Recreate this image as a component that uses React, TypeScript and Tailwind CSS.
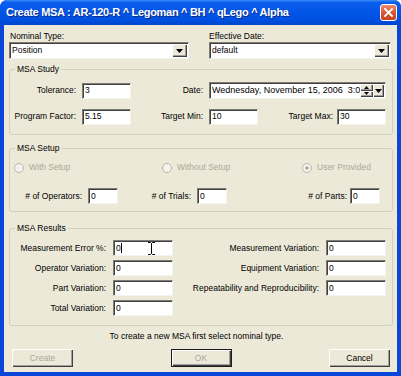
import React from "react";

const sunken =
  "bg-white border border-t-[#7f7d73] border-l-[#7f7d73] border-r-[#f4f3ee] border-b-[#f4f3ee] shadow-[inset_1px_1px_0_#404040]";

const raised =
  "bg-[#ece9d8] shadow-[inset_1px_1px_0_#ffffff,inset_-1px_-1px_0_#404040,inset_-2px_-2px_0_#a0a0a0]";

function Input({ w, v, children }: { w: string; v?: string; children?: React.ReactNode }) {
  return (
    <div className={`relative ${w} h-[16px] ${sunken} flex items-center pl-[2px] overflow-hidden whitespace-nowrap`}>
      {v}
      {children}
    </div>
  );
}

function Arrow({ up = false }: { up?: boolean }) {
  return (
    <svg width="7" height="4" viewBox="0 0 7 4">
      <path d={up ? "M0 4h7L3.5 0z" : "M0 0h7L3.5 4z"} fill="#000" />
    </svg>
  );
}

function Combo({ w, v }: { w: string; v: string }) {
  return (
    <div className={`${w} h-[17px] ${sunken} flex items-stretch p-[1px] pl-[2px]`}>
      <div className="flex-1 flex items-center">{v}</div>
      <div className={`w-[15px] ${raised} flex items-center justify-center`}>
        <Arrow />
      </div>
    </div>
  );
}

function DatePicker() {
  return (
    <div className={`w-[177px] h-[17px] ${sunken} flex items-stretch p-[1px] pl-[2px]`}>
      <div className="flex-1 flex items-center whitespace-pre text-[9px]">
        Wednesday, November 15, 2006  3:0
      </div>
      <div className="w-[13px] flex flex-col">
        <div className={`flex-1 ${raised} flex items-center justify-center`}>
          <svg width="5" height="3" viewBox="0 0 5 3">
            <path d="M0 3h5L2.5 0z" fill="#000" />
          </svg>
        </div>
        <div className={`flex-1 ${raised} flex items-center justify-center`}>
          <svg width="5" height="3" viewBox="0 0 5 3">
            <path d="M0 0h5L2.5 3z" fill="#000" />
          </svg>
        </div>
      </div>
      <div className={`w-[12px] ${raised} flex items-center justify-center`}>
        <Arrow />
      </div>
    </div>
  );
}

function Radio({ label, checked = false, w }: { label: string; checked?: boolean; w: string }) {
  return (
    <div className={`${w} flex items-center gap-[5px] text-[#aca899]`}>
      <svg width="10" height="10" viewBox="0 0 10 10">
        <circle cx="5" cy="5" r="4.5" fill="#f4f3ee" stroke="#b8b5a6" />
        {checked && <circle cx="5" cy="5" r="1.8" fill="#aca899" />}
      </svg>
      {label}
    </div>
  );
}

function Group({ title, className, children }: { title: string; className: string; children: React.ReactNode }) {
  return (
    <fieldset className={`ml-[5px] mr-[4px] border border-[#d0d0bf] rounded-[3px] ${className}`}>
      <legend className="ml-[5px] px-[2px] leading-[11px]">{title}</legend>
      {children}
    </fieldset>
  );
}

function Btn({ label, disabled = false, def = false }: { label: string; disabled?: boolean; def?: boolean }) {
  return (
    <div
      className={`w-[61px] h-[18px] flex items-center justify-center ${raised} ${
        def ? "border border-[#1c1c1c]" : ""
      } ${disabled ? "text-[#aca899]" : "text-black"}`}
    >
      {label}
    </div>
  );
}

export default function App() {
  return (
    <div className="w-[401px] h-[376px] flex flex-col bg-[#0a46da] rounded-t-[7px] overflow-hidden font-['Liberation_Sans',Arial,sans-serif] text-[8.5px] leading-[11px] text-black">
      {/* title bar */}
      <div className="h-[25px] flex items-center bg-[linear-gradient(to_bottom,#3b8cf7_0%,#0b5ded_10%,#0256e8_45%,#0050e0_80%,#0044cc_100%)]">
        <div className="flex-1 pl-[6px] text-white font-bold text-[11px] tracking-[-0.3px] [text-shadow:1px_1px_0_#0a2a8a]">
          Create MSA : AR-120-R ^ Legoman ^ BH ^ qLego ^ Alpha
        </div>
        <div className="mr-[4px] w-[17px] h-[17px] rounded-[3px] border border-white bg-[linear-gradient(to_bottom,#ee8a6b,#d8552f_55%,#c8441e)] flex items-center justify-center">
          <svg width="9" height="9" viewBox="0 0 9 9">
            <path d="M1 1l7 7M8 1L1 8" stroke="#fff" strokeWidth="1.8" strokeLinecap="square" />
          </svg>
        </div>
      </div>

      {/* client */}
      <div className="mx-[4px] h-[347px] bg-[#ece9d8] flex flex-col">
        <div className="mt-[6px] flex">
          <div className="w-[200px] pl-[6px]">Nominal Type:</div>
          <div className="pl-[5px]">Effective Date:</div>
        </div>
        <div className="flex ml-[5px]">
          <Combo w="w-[180px]" v="Position" />
          <div className="ml-[20px]">
            <Combo w="w-[182px]" v="default" />
          </div>
        </div>

        <Group title="MSA Study" className="mt-[5px] pt-[7px] pb-[9px]">
          <div className="flex items-center h-[17px]">
            <span className="w-[66px] text-right">Tolerance:</span>
            <span className="ml-[6px]"><Input w="w-[49px]" v="3" /></span>
            <span className="w-[72px] text-right">Date:</span>
            <span className="ml-[6px]"><DatePicker /></span>
          </div>
          <div className="flex items-center h-[17px] mt-[9px]">
            <span className="w-[66px] text-right">Program Factor:</span>
            <span className="ml-[6px]"><Input w="w-[49px]" v="5.15" /></span>
            <span className="w-[72px] text-right">Target Min:</span>
            <span className="ml-[6px]"><Input w="w-[49px]" v="10" /></span>
            <span className="w-[75px] text-right">Target Max:</span>
            <span className="ml-[4px]"><Input w="w-[49px]" v="30" /></span>
          </div>
        </Group>

        <Group title="MSA Setup" className="mt-[8px] pt-[8px] pb-[7px]">
          <div className="flex items-center h-[11px] pl-[4px]">
            <Radio w="w-[148px]" label="With Setup" />
            <Radio w="w-[140px]" label="Without Setup" />
            <Radio w="w-[80px]" label="User Provided" checked />
          </div>
          <div className="flex items-center mt-[15px]">
            <span className="w-[72px] text-right"># of Operators:</span>
            <span className="ml-[6px]"><Input w="w-[30px]" v="0" /></span>
            <span className="w-[73px] text-right"># of Trials:</span>
            <span className="ml-[6px]"><Input w="w-[30px]" v="0" /></span>
            <span className="w-[120px] text-right"># of Parts:</span>
            <span className="ml-[3px]"><Input w="w-[30px]" v="0" /></span>
          </div>
        </Group>

        <Group title="MSA Results" className="mt-[11px] pt-[6px] pb-[9px]">
          <div className="grid grid-cols-[96px_60px_139px_60px] gap-x-[7px] gap-y-[4px] items-center">
            <span className="text-right">Measurement Error %:</span>
            <Input w="w-[60px]" v="0">
              <span className="w-[1px] h-[10px] bg-black" />
              <svg className="absolute left-[34px] top-[1px]" width="7" height="13" viewBox="0 0 7 13">
                <path d="M0 0.5h2.5l1 1 1-1H7M3.5 1.5v10M0 12.5h2.5l1-1 1 1H7" stroke="#000" fill="none" strokeWidth="1" />
              </svg>
            </Input>
            <span className="text-right">Measurement Variation:</span>
            <Input w="w-[60px]" v="0" />

            <span className="text-right">Operator Variation:</span>
            <Input w="w-[60px]" v="0" />
            <span className="text-right">Equipment Variation:</span>
            <Input w="w-[60px]" v="0" />

            <span className="text-right">Part Variation:</span>
            <Input w="w-[60px]" v="0" />
            <span className="text-right">Repeatability and  Reproducibility:</span>
            <Input w="w-[60px]" v="0" />

            <span className="text-right">Total Variation:</span>
            <Input w="w-[60px]" v="0" />
          </div>
        </Group>

        <div className="mt-[5px] text-center pr-[8px]">To create a new MSA first select nominal type.</div>

        <div className="mt-[7px] flex justify-between pl-[8px] pr-[7px]">
          <Btn label="Create" disabled />
          <Btn label="OK" disabled def />
          <Btn label="Cancel" />
        </div>
      </div>
    </div>
  );
}
